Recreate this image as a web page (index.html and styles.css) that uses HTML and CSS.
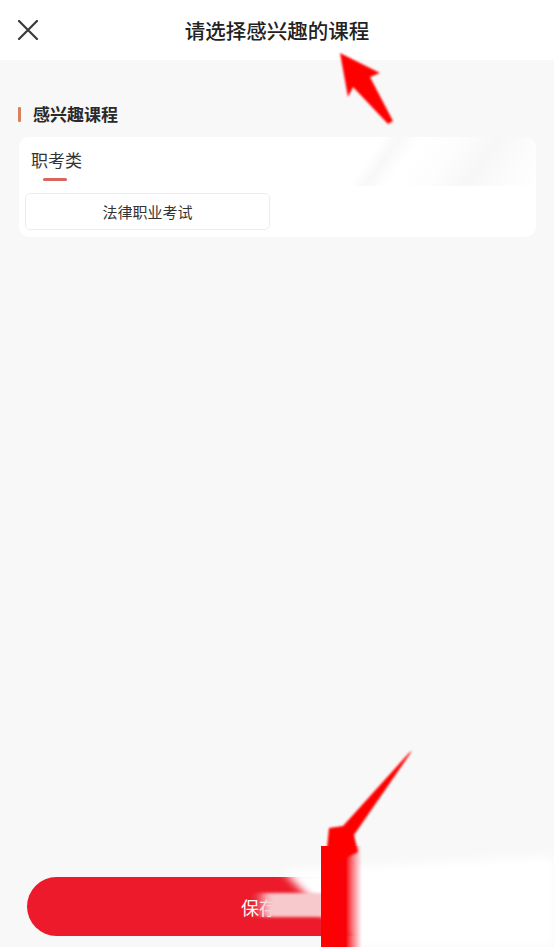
FILE: index.html
```html
<!DOCTYPE html>
<html lang="zh-CN">
<head>
  <meta charset="UTF-8" />
  <title>请选择感兴趣的课程</title>
  <link rel="stylesheet" href="styles.css">
</head>
<body>
  <div class="page">
    <header class="topbar">
      <span class="close">
        <svg width="20" height="20" viewBox="0 0 20 20">
          <path d="M1 1 L19 19 M19 1 L1 19" stroke="#3a3a3a" stroke-width="2.2" stroke-linecap="round" fill="none"/>
        </svg>
      </span>
      <h1>请选择感兴趣的课程</h1>
    </header>

    <main class="content">
      <h2 class="section-title">感兴趣课程</h2>

      <div class="card">
        <div class="card-head">
          <span class="tab active">职考类</span>
        </div>
        <div class="chips">
          <button class="chip">法律职业考试</button>
        </div>
      </div>
    </main>

    <footer class="footer">
      <button class="btn-save">保存</button>
    </footer>
  </div>

  <!-- annotation marks drawn over the screenshot -->
  <svg class="marks" width="554" height="947" viewBox="0 0 554 947">
    <defs>
      <filter id="soft" x="-20%" y="-20%" width="140%" height="140%">
        <feGaussianBlur stdDeviation="0.8"/>
      </filter>
      <filter id="smear" x="-30%" y="-30%" width="160%" height="160%">
        <feGaussianBlur stdDeviation="4"/>
      </filter>
      <filter id="streak" x="-30%" y="-30%" width="160%" height="160%">
        <feGaussianBlur stdDeviation="6 1.5"/>
      </filter>
      <linearGradient id="band" x1="321" x2="362" y1="0" y2="0" gradientUnits="userSpaceOnUse">
        <stop offset="0" stop-color="#ff0000"/>
        <stop offset="0.6" stop-color="#f80008"/>
        <stop offset="1" stop-color="#ff3040" stop-opacity="0"/>
      </linearGradient>
    </defs>

    <polygon points="283,871 554,856 554,947 357,947" fill="#ffffff" filter="url(#smear)"/>
    <rect x="262" y="893" width="70" height="24" fill="#f7c9cd" filter="url(#streak)"/>
    <rect x="321" y="846" width="41" height="101" fill="url(#band)"/>

    <polygon points="340,53 380,73 370,77 393,121 388,124 353,87 348,97" fill="#ff0000" filter="url(#soft)"/>
    <polygon points="412,751 354,835 358,852 325,868 329,828 343,826 409,753" fill="#ff0000" filter="url(#soft)"/>
  </svg>
</body>
</html>
```

FILE: styles.css
```css
body { margin: 0; font-family: "Noto Sans CJK SC", "Noto Sans", sans-serif; background: #f8f8f8; color: #333; }
.page { display: flex; flex-direction: column; height: 947px; }

.topbar { height: 60px; background: #fff; display: flex; align-items: center; justify-content: center; position: relative; }
.topbar h1 { margin: 0; font-size: 20.5px; font-weight: 500; color: #222; line-height: 1; }
.close { position: absolute; left: 18px; top: 20px; width: 20px; height: 20px; }
.close svg { display: block; }

.content { flex: 1; padding: 42px 18px 0 19px; }
.section-title { margin: 0 0 11px; font-size: 17px; font-weight: 700; line-height: 24px; color: #2a2a2a; display: flex; align-items: center; }
.section-title::before { content: ""; width: 3px; height: 15px; background: #d9805f; margin: 0 12px 0 -1px; border-radius: 1px; }

.card { background: #fff; border-radius: 10px; overflow: hidden; }
.card-head { height: 49px; padding: 0 12px; display: flex; align-items: flex-start; background: linear-gradient(125deg, #fff 66%, #f8f8f8 69%, #fff 73%, #fdfdfd 80%, #f7f7f7 87%, #fcfcfc 94%, #fff 100%); }
.tab { position: relative; font-size: 17px; line-height: 22px; padding-top: 12px; color: #333; }
.tab.active::after { content: ""; position: absolute; left: 12px; top: 41px; width: 24px; height: 2.5px; background: #d9665d; border-radius: 2px; }

.chips { display: grid; grid-template-columns: 245px 245px; gap: 15px; padding: 7px 6px 7px; }
.chip { height: 37px; border: 1px solid #ececec; border-radius: 5px; background: #fff; font-family: inherit; font-size: 15px; color: #333; padding: 0; }

.footer { padding: 0 27px 11px; }
.btn-save { width: 100%; height: 59px; border: none; border-radius: 30px; background: #ec1a2b; color: #fff; font-family: inherit; font-size: 18px; padding: 0 36px 0 0; }

.marks { position: absolute; left: 0; top: 0; pointer-events: none; }
```
